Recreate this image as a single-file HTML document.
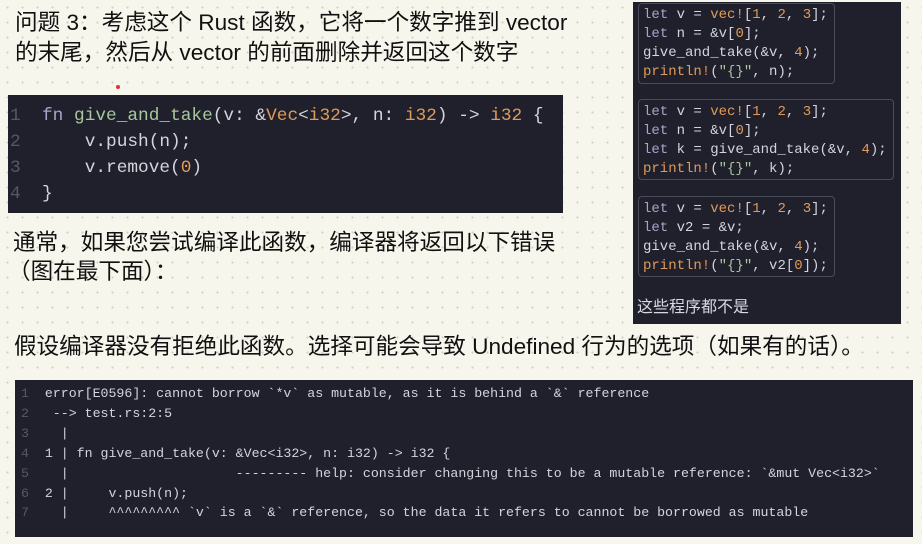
<!DOCTYPE html>
<html><head><meta charset="utf-8"><style>
html,body{margin:0;padding:0}
body{width:922px;height:544px;position:relative;overflow:hidden;background-color:#f7f6ec;
background-image:radial-gradient(circle,#cfcfc4 0.8px,transparent 1.2px);background-size:15px 15px;
font-family:"Liberation Sans","Noto Sans CJK SC",sans-serif;color:#111}
.t{position:absolute;font-size:22.6px;white-space:nowrap;line-height:30px}
.dark{position:absolute;background:#1f202c}
pre{margin:0;font-family:"Liberation Mono",monospace;white-space:pre;color:#d4d4dc}
.k{color:#a9a3c9}.f{color:#a8c79a}.o{color:#e09a5a}.s{color:#a8c79a}.n{color:#555868}
.box{position:absolute;border:1px solid #4a4c5a;border-radius:4px}
</style></head><body>
<div class="t" style="left:15px;top:8px">问题 3：考虑这个 Rust 函数，它将一个数字推到 vector</div>
<div class="t" style="left:15px;top:38px">的末尾，然后从 vector 的前面删除并返回这个数字</div>
<div style="position:absolute;left:116px;top:85px;width:4px;height:4px;border-radius:2px;background:#d33"></div>

<div class="dark" style="left:8px;top:95px;width:555px;height:118px">
<pre style="position:absolute;left:2px;top:8px;font-size:17.8px;line-height:26px"><span class="n">1</span>  <span class="k">fn</span> <span class="f">give_and_take</span>(v: &amp;<span class="o">Vec</span>&lt;<span class="o">i32</span>&gt;, n: <span class="o">i32</span>) -&gt; <span class="o">i32</span> {
<span class="n">2</span>      v.push(n);
<span class="n">3</span>      v.remove(<span class="o">0</span>)
<span class="n">4</span>  }</pre>
</div>

<div class="dark" style="left:633px;top:2px;width:268px;height:322px">
<div class="box" style="left:5px;top:1px;width:195px;height:79px"></div>
<div class="box" style="left:5px;top:97px;width:254px;height:79px"></div>
<div class="box" style="left:5px;top:194px;width:195px;height:79px"></div>
<pre style="position:absolute;left:10px;top:4px;font-size:14px;line-height:19px"><span class="k">let</span> v = <span class="o">vec!</span>[<span class="o">1</span>, <span class="o">2</span>, <span class="o">3</span>];
<span class="k">let</span> n = &amp;v[<span class="o">0</span>];
give_and_take(&amp;v, <span class="o">4</span>);
<span class="o">println!</span>(<span class="s">"{}"</span>, n);</pre>
<pre style="position:absolute;left:10px;top:101px;font-size:14px;line-height:19px"><span class="k">let</span> v = <span class="o">vec!</span>[<span class="o">1</span>, <span class="o">2</span>, <span class="o">3</span>];
<span class="k">let</span> n = &amp;v[<span class="o">0</span>];
<span class="k">let</span> k = give_and_take(&amp;v, <span class="o">4</span>);
<span class="o">println!</span>(<span class="s">"{}"</span>, k);</pre>
<pre style="position:absolute;left:10px;top:198px;font-size:14px;line-height:19px"><span class="k">let</span> v = <span class="o">vec!</span>[<span class="o">1</span>, <span class="o">2</span>, <span class="o">3</span>];
<span class="k">let</span> v2 = &amp;v;
give_and_take(&amp;v, <span class="o">4</span>);
<span class="o">println!</span>(<span class="s">"{}"</span>, v2[<span class="o">0</span>]);</pre>
<div style="position:absolute;left:4px;top:291px;font-size:16px;color:#d8d8e0">这些程序都不是</div>
</div>

<div class="t" style="left:13px;top:228px">通常，如果您尝试编译此函数，编译器将返回以下错误</div>
<div class="t" style="left:8px;top:257px">（图在最下面）：</div>
<div class="t" style="left:14px;top:332px">假设编译器没有拒绝此函数。选择可能会导致 Undefined 行为的选项（如果有的话）。</div>

<div class="dark" style="left:15px;top:380px;width:898px;height:157px">
<pre style="position:absolute;left:6px;top:4px;font-size:13.25px;line-height:19.9px"><span class="n">1</span>  error[E0596]: cannot borrow `*v` as mutable, as it is behind a `&amp;` reference
<span class="n">2</span>   --&gt; test.rs:2:5
<span class="n">3</span>    |
<span class="n">4</span>  1 | fn give_and_take(v: &amp;Vec&lt;i32&gt;, n: i32) -&gt; i32 {
<span class="n">5</span>    |                     --------- help: consider changing this to be a mutable reference: `&amp;mut Vec&lt;i32&gt;`
<span class="n">6</span>  2 |     v.push(n);
<span class="n">7</span>    |     ^^^^^^^^^ `v` is a `&amp;` reference, so the data it refers to cannot be borrowed as mutable</pre>
</div>
</body></html>
